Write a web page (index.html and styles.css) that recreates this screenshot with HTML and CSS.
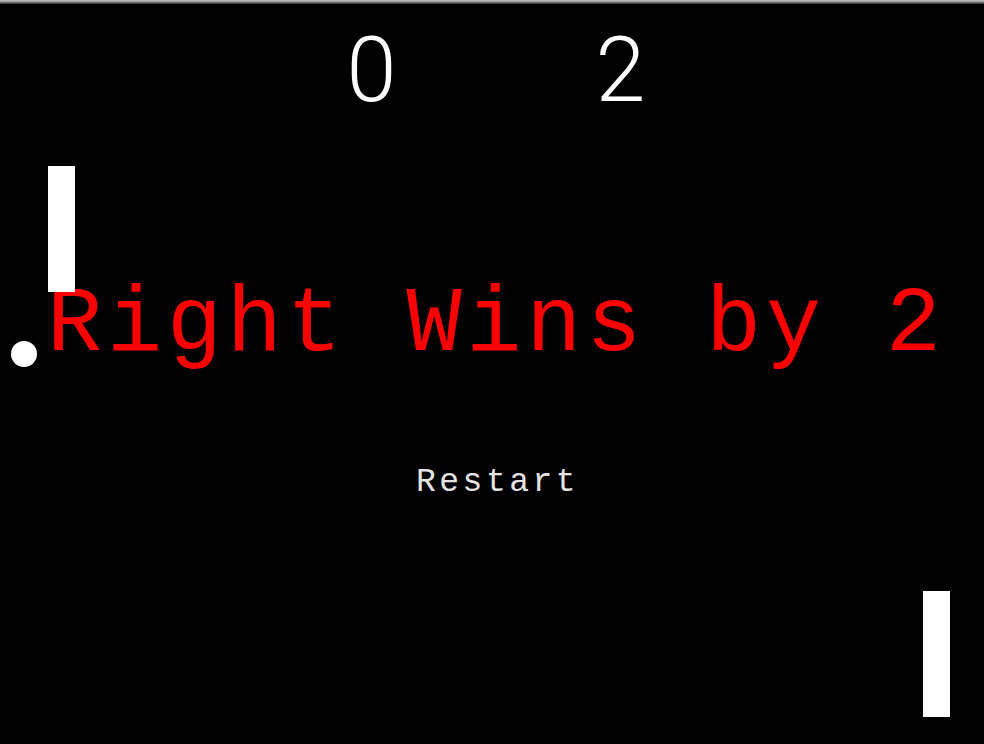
FILE: index.html
```html
<!DOCTYPE html>
<html>
<head>
<meta charset="utf-8">
<title>Pong</title>
<link rel="stylesheet" href="styles.css">
</head>
<body>
<div class="frame"></div>
<main class="court">
  <div class="scores">
    <span class="score">0</span>
    <span class="score">2</span>
  </div>
  <div class="message">Right Wins by 2</div>
  <div class="restart">Restart</div>
  <div class="paddle paddle-left"></div>
  <div class="paddle paddle-right"></div>
  <div class="ball"></div>
</main>
</body>
</html>
```

FILE: styles.css
```css
html, body {
  margin: 0;
  padding: 0;
  background: #000;
}

body {
  width: 984px;
  height: 744px;
  overflow: hidden;
  font-family: "Liberation Mono", "DejaVu Sans Mono", monospace;
}

.frame {
  height: 4px;
  background: linear-gradient(to bottom, #c8c8c8 0%, #9a9a9a 40%, #5a5a5a 75%, #2a2a2a 100%);
}

.court {
  position: relative;
  height: 740px;
  display: flex;
  flex-direction: column;
}

.scores {
  display: flex;
  gap: 186px;
  padding-left: 340px;
  margin-top: 17px;
  height: 100px;
}

.score {
  width: 63px;
  text-align: center;
  color: #fff;
  font-family: Roboto, "Liberation Sans", sans-serif;
  font-weight: 300;
  font-size: 90px;
  line-height: 100px;
}

.message {
  margin-top: 155px;
  margin-left: 47px;
  color: #ff0000;
  font-size: 92px;
  line-height: 100px;
  letter-spacing: 4.7px;
  white-space: nowrap;
}

.restart {
  margin-top: 87px;
  margin-left: 416px;
  color: #e4e4e4;
  font-size: 33px;
  line-height: 40px;
  letter-spacing: 3.5px;
}

.paddle {
  position: absolute;
  width: 27px;
  height: 126px;
  background: #fff;
}

.paddle-left {
  left: 48px;
  top: 162px;
}

.paddle-right {
  left: 923px;
  top: 587px;
}

.ball {
  position: absolute;
  left: 11px;
  top: 337px;
  width: 26px;
  height: 26px;
  border-radius: 50%;
  background: #fff;
}
```
